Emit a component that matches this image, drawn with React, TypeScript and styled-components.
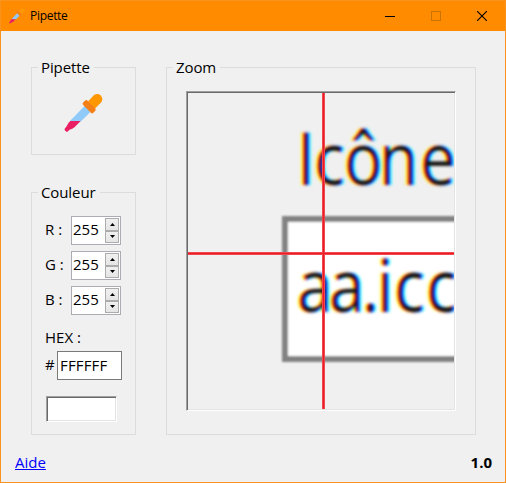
import React from "react";
import styled, { createGlobalStyle } from "styled-components";

const GlobalStyle = createGlobalStyle`
  * { box-sizing: border-box; }
  body { margin: 0; background: #f0f0f0; }
  input, button { font: inherit; }
`;

const Window = styled.div`
  width: 506px;
  height: 483px;
  display: flex;
  flex-direction: column;
  background: #f0f0f0;
  border: 1px solid #f9921e;
  overflow: hidden;
  color: #000;
  font: 15px/20px "Open Sans", "Noto Sans", sans-serif;
`;

const TitleBar = styled.header`
  height: 30px;
  flex: none;
  display: flex;
  align-items: center;
  padding-left: 8px;
  background: #ff8c00;
`;

const Title = styled.h1`
  margin: 0 auto 0 5px;
  font-size: 12px;
  font-weight: 400;
  letter-spacing: -0.3px;
`;

const WindowButton = styled.button`
  width: 46px;
  height: 30px;
  padding: 0;
  border: 0;
  background: none;
  svg { display: block; margin: 0 auto; }
`;

const Content = styled.main`
  display: grid;
  grid-template-columns: 105px 310px;
  column-gap: 30px;
  padding: 36px 0 0 30px;
`;

const Column = styled.div`
  display: flex;
  flex-direction: column;
  gap: 37px;
`;

const Group = styled.section<{ $height: number }>`
  height: ${(p) => p.$height}px;
  border: 1px solid #dcdcdc;
`;

const Legend = styled.h2`
  width: max-content;
  height: 20px;
  margin: -11px 0 0 6px;
  padding: 0 4px 0 3px;
  background: #f0f0f0;
  font-size: 15px;
  line-height: 20px;
  font-weight: 400;
  letter-spacing: -0.1px;
`;

const PickerButton = styled.button`
  display: block;
  margin: 16px auto 0 32px;
  padding: 0;
  border: 0;
  background: none;
  svg { display: block; }
`;

const Channels = styled.div`
  display: flex;
  flex-direction: column;
  gap: 6px;
  margin: 14px 0 0 13px;
`;

const ChannelRow = styled.label`
  display: grid;
  grid-template-columns: 26px 50px;
  height: 29px;
  line-height: 27px;
`;

const SpinBox = styled.span`
  display: flex;
  justify-content: space-between;
  padding: 1px 1px 1px 1px;
  border: 1px solid #abadb3;
  background: #fff;
  line-height: 23px;
`;

const SpinButtons = styled.span`
  display: flex;
  flex-direction: column;
  width: 14px;
`;

const SpinButton = styled.button`
  display: flex;
  align-items: center;
  justify-content: center;
  height: 12.5px;
  padding: 0;
  border: 1px solid #acacac;
  background: linear-gradient(#f0f0f0, #e5e5e5);
`;

const HexLabel = styled.div`
  margin: 12px 0 0 13px;
`;

const HexRow = styled.label`
  display: grid;
  grid-template-columns: 12px 65px;
  margin: 4px 0 0 13px;
  line-height: 27px;
`;

const HexField = styled.span`
  height: 29px;
  padding-left: 2px;
  border: 1px solid #7a7a7a;
  background: #fff;
  letter-spacing: 0.15px;
`;

const Sunken = styled.div<{ $w: number; $h: number; $fill: string }>`
  width: ${(p) => p.$w}px;
  height: ${(p) => p.$h}px;
  border: 1px solid;
  border-color: #a0a0a0 #fff #fff #a0a0a0;
  background: ${(p) => p.$fill};
  box-shadow: inset 1px 1px #696969, inset -1px -1px #e3e3e3;
`;

const Swatch = styled(Sunken)`
  margin: 16px 0 0 14px;
`;

const Magnifier = styled(Sunken)`
  margin: 14px 0 0 19px;
  padding: 1px;
  svg { display: block; }
`;

const Footer = styled.footer`
  display: flex;
  justify-content: space-between;
  padding: 17px 13px 0 14px;
`;

const HelpLink = styled.a`
  color: #0000ff;
  text-decoration: underline;
  text-underline-offset: 1px;
  text-decoration-thickness: 1px;
`;

function Dropper({ size }: { size: number }) {
  return (
    <svg width={size} height={size} viewBox="0 0 40 40">
      <path d="M24 8.5 29.6 2.6A5 5 0 0 1 36.8 9.8L30.8 15.7Z" fill="#ff9800" />
      <path d="M21 12.5 27 18.5 16.7 28.5 6 28Z" fill="#90caf9" />
      <path d="M6.2 28H16.7L10.5 34.2Q8.5 35.8 5.5 36.8L3.8 38.4Q2.5 39 1.4 38L.8 37.2Q0 36 1.3 35L2.8 33Q3.6 30.3 6.2 28Z" fill="#e91e63" />
      <path d="M23.4 7.6 31.3 15.6Q32.2 16.8 31.3 17.7L29.3 19.8Q28 21 26.9 19.8L19.2 12Q18 10.8 19.1 9.6L21.2 7.6Q22.3 6.6 23.4 7.6Z" fill="#f57f17" />
    </svg>
  );
}

const STRETCH = 0.86;
const at = (xs: number[]) => xs.map((x) => (x / STRETCH).toFixed(1)).join(" ");

function MagnifiedView() {
  return (
    <svg width="266" height="316" viewBox="0 0 266 316">
      <defs>
        <filter id="fringe" x="-10%" y="-20%" width="120%" height="140%" colorInterpolationFilters="sRGB">
          <feGaussianBlur in="SourceAlpha" stdDeviation="1.8 1.4" result="ink" />
          <feOffset in="ink" dx="2.2" result="r" />
          <feOffset in="ink" dx="-2.2" result="b" />
          <feFlood floodColor="#10ffff" />
          <feComposite in2="r" operator="in" result="cyan" />
          <feFlood floodColor="#ff10ff" />
          <feComposite in2="ink" operator="in" result="magenta" />
          <feFlood floodColor="#ffff10" />
          <feComposite in2="b" operator="in" result="yellow" />
          <feBlend in="cyan" in2="magenta" mode="multiply" result="cm" />
          <feBlend in="cm" in2="yellow" mode="multiply" />
        </filter>
        <filter id="soft">
          <feGaussianBlur stdDeviation="1.1" />
        </filter>
      </defs>
      <rect width="266" height="316" fill="#f0f0f0" />
      <rect x="97" y="126" width="210" height="140" fill="#fff" stroke="#828282" strokeWidth="6" filter="url(#soft)" />
      <g fontFamily='"Open Sans", "Noto Sans", sans-serif' fontWeight="500" fontSize="74" transform={`scale(${STRETCH} 1)`}>
        <text x={at([109, 126, 156, 191, 232])} y="92" filter="url(#fringe)">Icône</text>
        <text x={at([109, 141, 174, 189, 206, 238])} y="219" filter="url(#fringe)">aa.icc</text>
      </g>
      <path d="M135.5 0V316M0 160.5H266" stroke="#f04850" strokeWidth="3" />
      <path d="M135.5 0V316M0 160.5H266" stroke="#ed1c24" />
    </svg>
  );
}

function Arrow({ down }: { down?: boolean }) {
  return (
    <svg width="5" height="3" viewBox="0 0 5 3">
      <path d={down ? "M0 0H5L2.5 3Z" : "M0 3H5L2.5 0Z"} />
    </svg>
  );
}

export default function App() {
  return (
    <>
      <GlobalStyle />
      <Window>
        <TitleBar>
          <Dropper size={16} />
          <Title>Pipette</Title>
          <WindowButton aria-label="Réduire">
            <svg width="10" height="10"><path d="M0 5.5H10" stroke="#000" /></svg>
          </WindowButton>
          <WindowButton aria-label="Agrandir" disabled>
            <svg width="10" height="10"><rect x=".5" y=".5" width="9" height="9" fill="none" stroke="#cb7206" /></svg>
          </WindowButton>
          <WindowButton aria-label="Fermer">
            <svg width="10" height="10"><path d="M0 0 10 10M10 0 0 10" stroke="#000" strokeWidth="1.1" /></svg>
          </WindowButton>
        </TitleBar>
        <Content>
          <Column>
            <Group $height={88}>
              <Legend>Pipette</Legend>
              <PickerButton aria-label="Choisir une couleur"><Dropper size={40} /></PickerButton>
            </Group>
            <Group $height={243}>
              <Legend>Couleur</Legend>
              <Channels>
                {["R", "G", "B"].map((name) => (
                  <ChannelRow key={name}>
                    <span>{name} :</span>
                    <SpinBox>
                      <span>255</span>
                      <SpinButtons>
                        <SpinButton aria-label="Plus"><Arrow /></SpinButton>
                        <SpinButton aria-label="Moins"><Arrow down /></SpinButton>
                      </SpinButtons>
                    </SpinBox>
                  </ChannelRow>
                ))}
              </Channels>
              <HexLabel>HEX :</HexLabel>
              <HexRow>
                <span>#</span>
                <HexField>FFFFFF</HexField>
              </HexRow>
              <Swatch $w={71} $h={26} $fill="#fff" />
            </Group>
          </Column>
          <Group $height={368}>
            <Legend>Zoom</Legend>
            <Magnifier $w={270} $h={320} $fill="#f0f0f0"><MagnifiedView /></Magnifier>
          </Group>
        </Content>
        <Footer>
          <HelpLink href="#">Aide</HelpLink>
          <strong>1.0</strong>
        </Footer>
      </Window>
    </>
  );
}
